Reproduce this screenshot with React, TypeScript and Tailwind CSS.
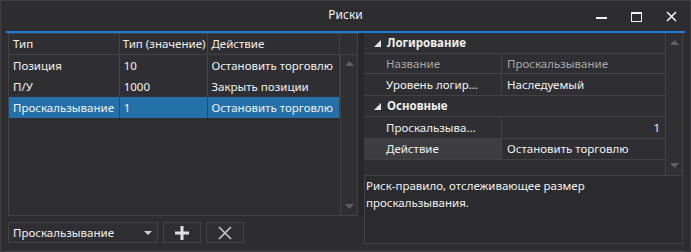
import React from 'react';

const rows = [
    { type: 'Позиция', value: '10', action: 'Остановить торговлю' },
    { type: 'П/У', value: '1000', action: 'Закрыть позиции' },
    { type: 'Проскальзывание', value: '1', action: 'Остановить торговлю', selected: true },
];

const UpArrow = () => (
    <svg width="9" height="5" viewBox="0 0 9 5"><path d="M0 5 L4.5 0 L9 5 Z" fill="#5f5f63" /></svg>
);
const DownArrow = () => (
    <svg width="9" height="5" viewBox="0 0 9 5"><path d="M0 0 L4.5 5 L9 0 Z" fill="#5f5f63" /></svg>
);
const Expander = () => (
    <svg width="7" height="7" viewBox="0 0 7 7" className="mr-[6px]"><path d="M7 0 L7 7 L0 7 Z" fill="#e6e6e6" /></svg>
);

const cell = 'flex items-center whitespace-nowrap overflow-hidden border-r border-[#434346]';

const App: React.FC = () => {
    return (
        <div className="w-[691px] h-[252px] bg-[#2d2d30] border border-[#3f3f42] flex flex-col text-[11.5px] text-[#f1f1f1]" style={{ fontFamily: '"Noto Sans", "Open Sans", sans-serif' }}>
            {/* title bar */}
            <div className="h-[30px] relative flex items-center justify-center shrink-0">
                <span className="text-[12px] text-[#f1f1f1] -mt-[2px]">Риски</span>
                <div className="absolute right-[12px] top-[9px] flex items-center gap-[22px]">
                    <svg width="13" height="13" viewBox="0 0 13 13"><rect x="1" y="7" width="11" height="2" fill="#f1f1f1" /></svg>
                    <svg width="13" height="13" viewBox="0 0 13 13"><rect x="1.5" y="2.5" width="10" height="9" fill="none" stroke="#f1f1f1" /><rect x="1" y="2" width="11" height="2" fill="#f1f1f1" /></svg>
                    <svg width="13" height="13" viewBox="0 0 13 13"><path d="M2 2 L11 11 M11 2 L2 11" stroke="#f1f1f1" strokeWidth="1.6" /></svg>
                </div>
            </div>

            <div className="mx-[5px] border-t-2 border-[#1c7cd6] flex flex-1 pb-[6px] border-b border-b-[#3a3a3d]">
                {/* left pane */}
                <div className="w-[352px] pl-[2px] flex flex-col">
                    <div className="h-[183px] border border-[#434346] bg-[#2f2f33] flex">
                        <div className="flex-1 flex flex-col min-w-0">
                            <div className="flex h-[21px] border-b border-[#434346]">
                                <div className={`w-[111px] px-[4px] ${cell}`}>Тип</div>
                                <div className={`w-[89px] px-[3px] ${cell}`}>Тип (значение)</div>
                                <div className={`w-[132px] px-[3px] ${cell}`}>Действие</div>
                            </div>
                            {rows.map(r => (
                                <div key={r.type} className={`flex h-[21px] ${r.selected ? 'bg-[#2470a8]' : ''}`}>
                                    <div className={`w-[111px] px-[4px] ${cell}`}>{r.type}</div>
                                    <div className={`w-[89px] px-[4px] ${cell}`}>{r.value}</div>
                                    <div className={`w-[132px] px-[3px] ${cell}`}>{r.action}</div>
                                </div>
                            ))}
                        </div>
                        <div className="w-[17px] flex flex-col">
                            <div className="h-[21px] border-b border-[#434346]" />
                            <div className="flex-1 border-l border-[#434346] bg-[#303034] flex flex-col items-center justify-between py-[6px]">
                                <UpArrow />
                                <DownArrow />
                            </div>
                        </div>
                    </div>
                    <div className="flex items-center gap-[5px] mt-[6px]">
                        <div className="w-[150px] h-[21px] border border-[#434346] bg-[#2f2f33] flex items-center justify-between pl-[4px] pr-[5px]">
                            <span>Проскальзывание</span>
                            <svg width="8" height="4" viewBox="0 0 8 4"><path d="M0 0 L4 4 L8 0 Z" fill="#d0d0d0" /></svg>
                        </div>
                        <div className="w-[38px] h-[21px] border border-[#434346] bg-[#2f2f33] flex items-center justify-center">
                            <svg width="16" height="16" viewBox="0 0 16 16"><path d="M8 1 V15 M1 8 H15" stroke="#e0e0e0" strokeWidth="3" /></svg>
                        </div>
                        <div className="w-[38px] h-[21px] border border-[#434346] bg-[#2f2f33] flex items-center justify-center">
                            <svg width="16" height="16" viewBox="0 0 16 16"><path d="M2 2 L14 14 M14 2 L2 14" stroke="#c8c8c8" strokeWidth="1.6" /></svg>
                        </div>
                    </div>
                </div>

                {/* splitter */}
                <div className="w-[6px] h-[183px] bg-[#28282b]" />

                {/* right pane */}
                <div className="flex-1 flex flex-col">
                    <div className="h-[142px] flex bg-[#2f2f33]">
                        <div className="flex-1 flex flex-col min-w-0">
                            <div className="h-[21px] flex items-center pl-[10px] font-bold border-b border-[#434346]"><Expander />Логирование</div>
                            <div className="flex h-[20px] border-b border-[#434346]">
                                <div className={`w-[138px] pl-[22px] ${cell} text-[#a8a8a8]`}>Название</div>
                                <div className="flex-1 px-[5px] flex items-center text-[#a8a8a8]">Проскальзывание</div>
                            </div>
                            <div className="flex h-[22px] border-b border-[#434346]">
                                <div className={`w-[138px] pl-[22px] ${cell}`}>Уровень логир...</div>
                                <div className="flex-1 px-[5px] flex items-center">Наследуемый</div>
                            </div>
                            <div className="h-[21px] flex items-center pl-[10px] font-bold border-b border-[#434346]"><Expander />Основные</div>
                            <div className="flex h-[22px] border-b border-[#434346]">
                                <div className={`w-[138px] pl-[22px] ${cell}`}>Проскальзыва...</div>
                                <div className="flex-1 px-[5px] flex items-center justify-end">1</div>
                            </div>
                            <div className="flex h-[21px] border-b border-[#434346]">
                                <div className={`w-[138px] pl-[22px] ${cell} bg-[#3e3e42]`}>Действие</div>
                                <div className="flex-1 px-[5px] flex items-center whitespace-nowrap">Остановить торговлю</div>
                            </div>
                        </div>
                        <div className="w-[18px] border-l border-r border-[#434346] bg-[#303034] flex flex-col items-center justify-between py-[7px]">
                            <UpArrow />
                            <DownArrow />
                        </div>
                    </div>
                    <div className="flex-1 border border-[#434346] bg-[#2b2b2e] px-[1px] pt-[1px] leading-[17px]">
                        Риск-правило, отслеживающее размер<br />проскальзывания.
                    </div>
                </div>
                <div className="w-[2px]" />
            </div>
        </div>
    );
};

export default App;
